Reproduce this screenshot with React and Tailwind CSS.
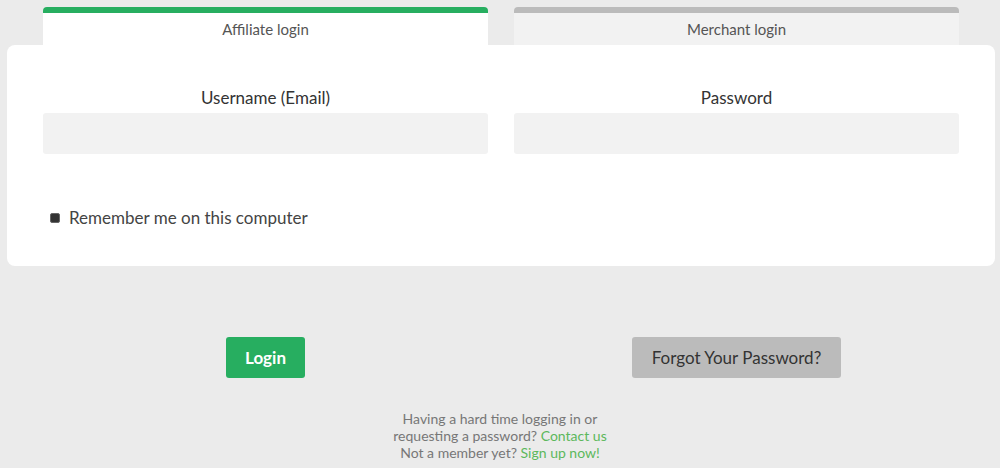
export default function App() {
  return (
    <div className="min-h-screen bg-[#ebebeb] pt-[7px] font-['Lato',sans-serif]">
      {/* TABS */}
      <div className="grid grid-cols-2 gap-[26px] pl-[43px] pr-[41px]">
        <div className="h-[38px] bg-white border-t-[6px] border-[#27ae60] rounded-t-[4px] flex items-center justify-center text-[15px] text-[#555]">
          Affiliate login
        </div>
        <div className="h-[38px] bg-[#f2f2f2] border-t-[6px] border-[#bbbbbb] rounded-t-[4px] flex items-center justify-center text-[15px] text-[#555]">
          Merchant login
        </div>
      </div>

      {/* CARD */}
      <div className="ml-[7px] mr-[5px] bg-white rounded-[8px] pl-[36px] pr-[36px] pt-[41px] pb-[36px]">
        <div className="grid grid-cols-2 gap-[26px]">
          <div>
            <label className="block text-center text-[17px] leading-[24px] text-[#333] mb-[3px]">Username (Email)</label>
            <input className="block w-full h-[41px] bg-[#f2f2f2] rounded-[3px] outline-none px-3" />
          </div>
          <div>
            <label className="block text-center text-[17px] leading-[24px] text-[#333] mb-[3px]">Password</label>
            <input type="password" className="block w-full h-[41px] bg-[#f2f2f2] rounded-[3px] outline-none px-3" />
          </div>
        </div>

        <div className="flex items-center mt-[52px] pl-[7px] h-[24px]">
          <span className="w-[10px] h-[10px] bg-[#333] border border-[#666] rounded-[2px] mr-[9px]"></span>
          <span className="text-[17px] text-[#444]">Remember me on this computer</span>
        </div>
      </div>

      {/* BUTTONS */}
      <div className="grid grid-cols-2 gap-[26px] pl-[43px] pr-[41px] mt-[71px]">
        <div className="flex justify-center">
          <button className="h-[41px] w-[79px] bg-[#27ae60] text-white font-bold text-[17px] rounded-[3px]">Login</button>
        </div>
        <div className="flex justify-center">
          <button className="h-[41px] w-[209px] bg-[#bbbbbb] text-[#333] text-[17px] rounded-[3px]">Forgot Your Password?</button>
        </div>
      </div>

      {/* FOOTER */}
      <div className="mt-[32px] text-center text-[14px] leading-[17px] text-[#777]">
        <p>Having a hard time logging in or</p>
        <p>requesting a password? <a className="text-[#5cb85c]">Contact us</a></p>
        <p>Not a member yet? <a className="text-[#5cb85c]">Sign up now!</a></p>
      </div>
    </div>
  );
}
